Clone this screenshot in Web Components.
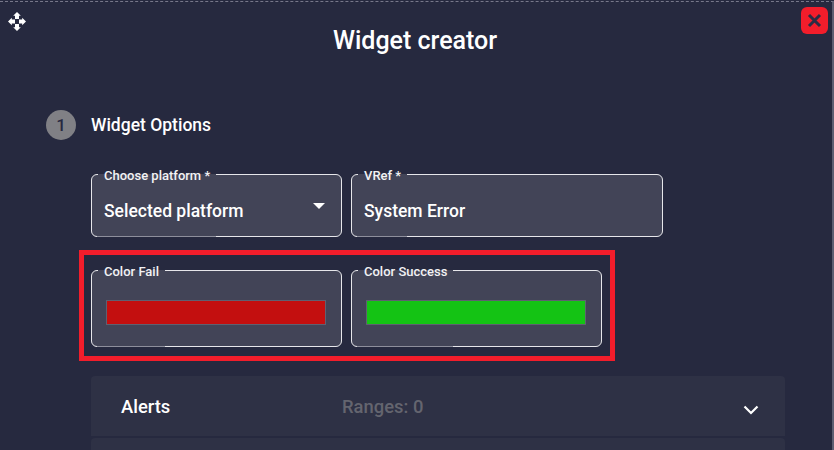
<!DOCTYPE html>
<html>
<head>
<meta charset="utf-8">
<title>Widget creator</title>
<style>
  html, body { margin: 0; height: 450px; overflow: hidden; background: #26293f; }
  body { font-family: Roboto, Arial, sans-serif; color: #fff; }
</style>
</head>
<body>
<widget-dialog>
  <step-title num="1">Widget Options</step-title>
  <form-row>
    <text-field label="Choose platform *" width="251" arrow>Selected platform</text-field>
    <text-field label="VRef *" width="312">System Error</text-field>
  </form-row>
  <form-row highlight>
    <color-field label="Color Fail" color="#c30f0f"></color-field>
    <color-field label="Color Success" color="#14c314"></color-field>
  </form-row>
  <accordion-row ranges="Ranges: 0">Alerts</accordion-row>
  <accordion-row></accordion-row>
</widget-dialog>

<script>
class WidgetDialog extends HTMLElement {
  constructor() {
    super();
    this.attachShadow({ mode: "open" });
  }
  connectedCallback() {
    this.shadowRoot.innerHTML = `
      <style>
        :host {
          display: block;
          box-sizing: border-box;
          position: relative;
          width: 834px;
          height: 450px;
          overflow: hidden;
          border-top: 1px dashed #77788a;
          margin-top: 1px;
          border-right: 2px solid #5d5e72;
        }
        header { box-sizing: border-box; height: 100px; padding-top: 25px; }
        h1 {
          margin: 0;
          font-size: 25px;
          line-height: 28px;
          font-weight: 500;
          text-align: center;
          transform: translateX(-1px);
        }
        .move { position: absolute; left: 8px; top: 10px; }
        .close {
          position: absolute;
          left: 801px;
          top: 5px;
          width: 27px;
          height: 27px;
          border-radius: 6px;
          background: #f21d2b;
          display: flex;
          align-items: center;
          justify-content: center;
        }
      </style>
      <header><h1>Widget creator</h1></header>
      <svg class="move" width="18" height="19" viewBox="0 0 18 19">
        <path fill="#fff" d="M9 0 L12.8 3.8 H11 V7 H7 V3.8 H5.2 Z M9 19 L5.2 15.2 H7 V12 H11 V15.2 H12.8 Z M0 9.5 L3.8 5.7 V7.5 H7 V11.5 H3.8 V13.3 Z M18 9.5 L14.2 13.3 V11.5 H11 V7.5 H14.2 V5.7 Z"/>
      </svg>
      <div class="close">
        <svg width="15" height="15" viewBox="0 0 15 15">
          <path d="M2 2 L13 13 M13 2 L2 13" stroke="#2b2c44" stroke-width="3" fill="none"/>
        </svg>
      </div>
      <slot></slot>
    `;
  }
}

class StepTitle extends HTMLElement {
  constructor() {
    super();
    this.attachShadow({ mode: "open" });
  }
  connectedCallback() {
    this.shadowRoot.innerHTML = `
      <style>
        :host {
          display: flex;
          align-items: center;
          gap: 15px;
          padding-left: 46px;
          height: 30px;
          margin-top: 8px;
          font-size: 17.5px;
          font-weight: 500;
        }
        .num {
          width: 30px;
          height: 30px;
          border-radius: 50%;
          background: #808085;
          color: #272840;
          display: flex;
          align-items: center;
          justify-content: center;
          font-size: 17px;
          font-weight: 500;
        }
      </style>
      <span class="num">${this.getAttribute("num")}</span>
      <slot></slot>
    `;
  }
}

class FormRow extends HTMLElement {
  constructor() {
    super();
    this.attachShadow({ mode: "open" });
  }
  connectedCallback() {
    this.shadowRoot.innerHTML = `
      <style>
        :host {
          display: flex;
          gap: 9px;
          position: relative;
          padding-left: 91px;
          margin-top: 33px;
        }
        :host([highlight]) { margin-top: 32px; }
        .mark {
          display: none;
          position: absolute;
          left: 79px;
          top: -19px;
          width: 536px;
          height: 111px;
          box-sizing: border-box;
          border: 5px solid #f21d2b;
          pointer-events: none;
        }
        :host([highlight]) .mark { display: block; }
      </style>
      <slot></slot>
      <div class="mark"></div>
    `;
  }
}

const fieldCss = `
  fieldset {
    box-sizing: border-box;
    margin: 0;
    padding: 0 12px;
    width: 100%;
    height: 100%;
    border: 1px solid #e6e6ea;
    border-radius: 6px;
    background: #424457;
    position: relative;
  }
  legend {
    margin-left: -6px;
    padding: 0 6px;
    font-size: 13px;
    line-height: 14px;
    font-weight: 500;
    color: #f2f2f4;
  }
  legend span { position: relative; top: 2px; }
  .dim {
    position: absolute;
    left: 5px;
    bottom: -1px;
    height: 1px;
    background: #8e8f9c;
  }
`;

function markLegend(root) {
  // the bottom border is dimmed under the legend's width
  root.querySelector(".dim").style.width = root.querySelector("legend").offsetWidth + 1 + "px";
}

class TextField extends HTMLElement {
  constructor() {
    super();
    this.attachShadow({ mode: "open" });
  }
  connectedCallback() {
    const w = this.getAttribute("width");
    this.shadowRoot.innerHTML = `
      <style>
        :host {
          display: block;
          width: ${w}px;
          height: 70px;
          font-size: 17.5px;
          font-weight: 500;
          margin-top: -6px;
        }
        ${fieldCss}
        .value { display: block; margin-top: 19px; line-height: 22px; }
        .arrow {
          position: absolute;
          right: 16px;
          top: 22px;
          width: 0;
          height: 0;
          border-left: 6.5px solid transparent;
          border-right: 6.5px solid transparent;
          border-top: 6px solid #fff;
        }
      </style>
      <fieldset>
        <legend><span>${this.getAttribute("label")}</span></legend>
        <span class="value"><slot></slot></span>
        ${this.hasAttribute("arrow") ? '<span class="arrow"></span>' : ""}
        <span class="dim"></span>
      </fieldset>
    `;
    markLegend(this.shadowRoot);
  }
}

class ColorField extends HTMLElement {
  constructor() {
    super();
    this.attachShadow({ mode: "open" });
  }
  connectedCallback() {
    this.shadowRoot.innerHTML = `
      <style>
        :host {
          display: block;
          width: 251px;
          height: 84px;
          margin-top: -6px;
        }
        ${fieldCss}
        .swatch {
          box-sizing: border-box;
          height: 25px;
          margin: 23px 3px 0 2px;
          background: ${this.getAttribute("color")};
          border: 1px solid #5f6070;
        }
      </style>
      <fieldset>
        <legend><span>${this.getAttribute("label")}</span></legend>
        <div class="swatch"></div>
        <span class="dim"></span>
      </fieldset>
    `;
    markLegend(this.shadowRoot);
  }
}

class AccordionRow extends HTMLElement {
  constructor() {
    super();
    this.attachShadow({ mode: "open" });
  }
  connectedCallback() {
    const ranges = this.getAttribute("ranges");
    this.shadowRoot.innerHTML = `
      <style>
        :host {
          display: grid;
          grid-template-columns: 221px 1fr auto;
          align-items: center;
          box-sizing: border-box;
          width: 694px;
          height: 60px;
          margin: 0 0 2px 91px;
          padding: 0 26px 0 30px;
          background: #2e3145;
          border-radius: 4px 4px 0 0;
          font-size: 18.4px;
          font-weight: 500;
        }
        :host(:first-of-type) { margin-top: 29px; }
        .ranges { color: #64656f; }
        svg { margin-top: 8px; }
      </style>
      <span><slot></slot></span>
      <span class="ranges">${ranges || ""}</span>
      ${ranges ? `<svg width="16" height="10" viewBox="0 0 16 10"><path d="M1.5 1.5 L8 8 L14.5 1.5" stroke="#fff" stroke-width="2.2" fill="none"/></svg>` : ""}
    `;
  }
}

customElements.define("widget-dialog", WidgetDialog);
customElements.define("step-title", StepTitle);
customElements.define("form-row", FormRow);
customElements.define("text-field", TextField);
customElements.define("color-field", ColorField);
customElements.define("accordion-row", AccordionRow);
</script>
</body>
</html>
